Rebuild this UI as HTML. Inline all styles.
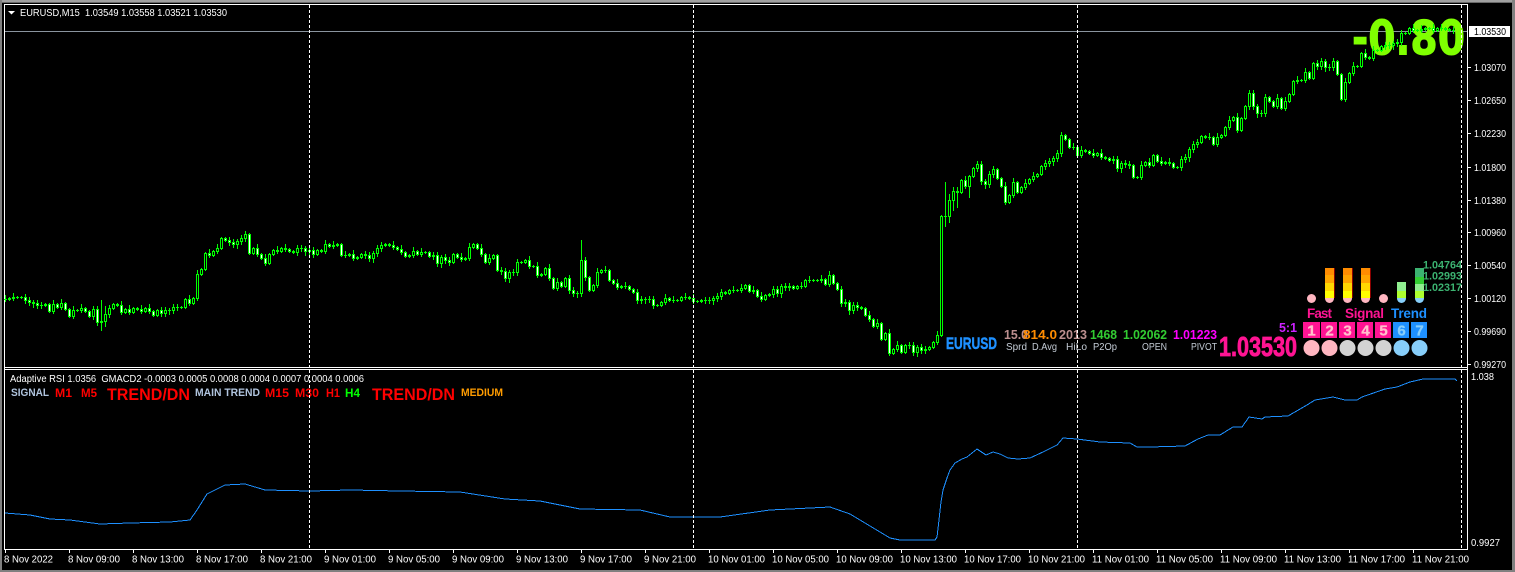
<!DOCTYPE html>
<html><head><meta charset="utf-8"><title>EURUSD,M15</title>
<style>
html,body{margin:0;padding:0;background:#000;width:1515px;height:572px;overflow:hidden}
svg{display:block;position:absolute;left:0;top:0}
text{font-family:"Liberation Sans",sans-serif;fill:#fff;font-size:10px}
.ax{font-size:10px;fill:#fff}
.lb{font-size:10px;fill:#c4ccd6}
.d{font-size:12.5px;font-weight:bold}
.n{font-size:15px;font-weight:bold;text-anchor:middle;stroke-width:.3px}
</style></head><body>
<svg id="c" width="1515" height="572" viewBox="0 0 1515 572" xmlns="http://www.w3.org/2000/svg">
<rect width="1515" height="572" fill="#000"/>
<g shape-rendering="crispEdges">
<rect x="0" y="0" width="1515" height="2" fill="#a0a0a0"/>
<rect x="0" y="2" width="1515" height="1" fill="#696969"/>
<rect x="0" y="0" width="2" height="572" fill="#808080"/>
<rect x="1512" y="0" width="3" height="572" fill="#808080"/>
<rect x="0" y="570" width="1515" height="2" fill="#808080"/>
</g>
<g fill="#fff" shape-rendering="crispEdges">
<rect x="4" y="4" width="1464" height="1"/>
<rect x="4" y="4" width="1" height="546"/>
<rect x="1467" y="4" width="1" height="546"/>
<rect x="4" y="367" width="1464" height="1"/>
<rect x="4" y="369" width="1464" height="1"/>
<rect x="4" y="549" width="1464" height="1"/>
</g>
<rect x="5" y="31" width="1462" height="1" fill="#8a949e" shape-rendering="crispEdges"/>
<text x="1352" y="54.5" textLength="113" lengthAdjust="spacingAndGlyphs" style="font-family:'DejaVu Sans',sans-serif;font-weight:bold;font-size:47px;fill:#7fff00;stroke:#7fff00;stroke-width:1px">-0.80</text>
<g id="candles" shape-rendering="crispEdges"></g>
<polyline fill="none" stroke="#1e90ff" stroke-width="1" shape-rendering="crispEdges" points="5,513 30,515 50,519 70,520 100,524 130,523 170,522 190,520 197,510 207,494 225,485 245,484 265,490 310,491 350,490 400,491 460,492 505,499 540,501 580,509 640,510 670,517 720,517 770,510 830,507 850,514 890,538 900,540 935,540 937,537 939,520 941,502 943,490 947,478 950,470 955,463 962,459 967,457 977,449 986,455 993,452 1000,454 1008,458 1018,459 1030,458 1043,452 1057,445 1063,438 1077,439 1100,442 1130,443 1137,447 1150,447 1185,446 1198,439 1208,435 1220,435 1233,427 1242,427 1249,417 1262,419 1265,417 1288,416 1307,405 1315,400 1333,397 1345,400 1357,400 1362,397 1385,389 1397,387 1410,382 1423,379 1455,379 1457,381"/>

<!-- right-bottom panel -->
<g fill="#ffb6c1">
<circle cx="1311.5" cy="298.5" r="4.5"/><circle cx="1329.5" cy="298.5" r="4.5"/><circle cx="1347.5" cy="298.5" r="4.5"/><circle cx="1365.5" cy="298.5" r="4.5"/><circle cx="1383.5" cy="298.5" r="4.5"/>
</g>
<g fill="#87cefa"><circle cx="1401.5" cy="298.5" r="4.5"/><circle cx="1419.5" cy="298.5" r="4.5"/></g>
<g shape-rendering="crispEdges">
<g id="bars"></g>
<rect x="1397" y="282" width="9" height="9" fill="#90ee90"/><rect x="1397" y="291" width="9" height="7" fill="#adff2f"/>
<rect x="1415" y="268" width="9" height="9" fill="#3cb371"/><rect x="1415" y="277" width="9" height="7" fill="#32cd32"/><rect x="1415" y="284" width="9" height="7" fill="#90ee90"/><rect x="1415" y="291" width="9" height="7" fill="#adff2f"/>
</g>
<text x="1423" y="268.5" textLength="39" lengthAdjust="spacingAndGlyphs" style="fill:#3cb371;font-weight:bold;font-size:11px">1.04764</text>
<text x="1423" y="279.5" textLength="39" lengthAdjust="spacingAndGlyphs" style="fill:#3cb371;font-weight:bold;font-size:11px">1.02993</text>
<text x="1423" y="291" textLength="39" lengthAdjust="spacingAndGlyphs" style="fill:#3cb371;font-weight:bold;font-size:11px">1.02317</text>
<text x="1307" y="318" textLength="25" lengthAdjust="spacing" style="fill:#ff1493;font-size:13.5px;font-weight:bold">Fast</text>
<text x="1345" y="318" textLength="39" lengthAdjust="spacing" style="fill:#ff1493;font-size:13.5px;font-weight:bold">Signal</text>
<text x="1391" y="318" textLength="36" lengthAdjust="spacing" style="fill:#1e90ff;font-size:13.5px;font-weight:bold">Trend</text>
<g shape-rendering="crispEdges" fill="#ff1493">
<rect x="1303" y="322" width="17" height="16"/><rect x="1321" y="322" width="16" height="16"/><rect x="1339" y="322" width="16" height="16"/><rect x="1357" y="322" width="16" height="16"/><rect x="1375" y="322" width="16" height="16"/>
<rect x="1393" y="322" width="16" height="16" fill="#1e90ff"/><rect x="1411" y="322" width="16" height="16" fill="#1e90ff"/>
</g>
<text class="n" x="1311.5" y="335.5" style="fill:#ffc0cb;stroke:#ffc0cb">1</text><text class="n" x="1329.5" y="335.5" style="fill:#ffc0cb;stroke:#ffc0cb">2</text><text class="n" x="1347.5" y="335.5" style="fill:#ffc0cb;stroke:#ffc0cb">3</text><text class="n" x="1365.5" y="335.5" style="fill:#ffc0cb;stroke:#ffc0cb">4</text><text class="n" x="1383.5" y="335.5" style="fill:#ffc0cb;stroke:#ffc0cb">5</text><text class="n" x="1401.5" y="335.5" style="fill:#87cefa;stroke:#87cefa">6</text><text class="n" x="1419.5" y="335.5" style="fill:#87cefa;stroke:#87cefa">7</text>
<circle cx="1311.5" cy="348" r="8" fill="#ffb6c1"/><circle cx="1329.5" cy="348" r="8" fill="#ffb6c1"/><circle cx="1347.5" cy="348" r="8" fill="#d3d3d3"/><circle cx="1365.5" cy="348" r="8" fill="#d3d3d3"/><circle cx="1383.5" cy="348" r="8" fill="#d3d3d3"/><circle cx="1401.5" cy="348" r="8" fill="#87cefa"/><circle cx="1419.5" cy="348" r="8" fill="#87cefa"/>
<text x="1279" y="332" textLength="18" lengthAdjust="spacingAndGlyphs" style="fill:#cc22ff;font-size:13px;font-weight:bold">5:1</text>
<text x="1219" y="356" textLength="78" lengthAdjust="spacingAndGlyphs" style="fill:#ff1493;font-size:27.5px;font-weight:bold;stroke:#ff1493;stroke-width:.8px">1.03530</text>
<text x="946" y="349" textLength="51" lengthAdjust="spacingAndGlyphs" style="fill:#1e90ff;font-size:17px;font-weight:bold;stroke:#1e90ff;stroke-width:.5px">EURUSD</text>
<text class="d" x="1004" y="339" textLength="24" lengthAdjust="spacingAndGlyphs" style="fill:#bc8f8f">15.0</text>
<text class="d" x="1023" y="339" textLength="34" lengthAdjust="spacingAndGlyphs" style="fill:#ff8c00">814.0</text>
<text class="d" x="1059" y="339" textLength="28" lengthAdjust="spacingAndGlyphs" style="fill:#bc8f8f">2013</text>
<text class="d" x="1090" y="339" textLength="27" lengthAdjust="spacingAndGlyphs" style="fill:#32cd32">1468</text>
<text class="d" x="1123" y="339" textLength="44" lengthAdjust="spacingAndGlyphs" style="fill:#32cd32">1.02062</text>
<text class="d" x="1173" y="339" textLength="44" lengthAdjust="spacingAndGlyphs" style="fill:#ff00ff">1.01223</text>
<text class="lb" x="1006" y="350" textLength="21" lengthAdjust="spacingAndGlyphs">Sprd</text>
<text class="lb" x="1032" y="350" textLength="25" lengthAdjust="spacingAndGlyphs">D.Avg</text>
<text class="lb" x="1066" y="350" textLength="21" lengthAdjust="spacingAndGlyphs">HiLo</text>
<text class="lb" x="1093" y="350" textLength="24" lengthAdjust="spacingAndGlyphs">P2Op</text>
<text class="lb" x="1142" y="350" textLength="25" lengthAdjust="spacingAndGlyphs">OPEN</text>
<text class="lb" x="1191" y="350" textLength="26" lengthAdjust="spacingAndGlyphs">PIVOT</text>

<!-- header -->
<polygon points="8,11 15,11 11.5,14.5" fill="#fff"/>
<text x="20" y="16" textLength="207" lengthAdjust="spacingAndGlyphs" xml:space="preserve">EURUSD,M15  1.03549 1.03558 1.03521 1.03530</text>
<text x="10" y="382" textLength="354" lengthAdjust="spacingAndGlyphs" xml:space="preserve">Adaptive RSI 1.0356  GMACD2 -0.0003 0.0005 0.0008 0.0004 0.0007 0.0004 0.0006</text>
<text x="11" y="396" textLength="38" lengthAdjust="spacingAndGlyphs" style="fill:#b0c4de;font-weight:bold;font-size:11px">SIGNAL</text>
<text x="55" y="397" textLength="17" lengthAdjust="spacingAndGlyphs" style="fill:#f00;font-weight:bold;font-size:12px">M1</text>
<text x="81" y="397" textLength="16" lengthAdjust="spacingAndGlyphs" style="fill:#f00;font-weight:bold;font-size:12px">M5</text>
<text x="107" y="400" textLength="83" lengthAdjust="spacingAndGlyphs" style="fill:#f00;font-weight:bold;font-size:17px">TREND/DN</text>
<text x="195" y="396" textLength="65" lengthAdjust="spacingAndGlyphs" style="fill:#b0c4de;font-weight:bold;font-size:11px">MAIN TREND</text>
<text x="265" y="397" textLength="24" lengthAdjust="spacingAndGlyphs" style="fill:#f00;font-weight:bold;font-size:12px">M15</text>
<text x="295" y="397" textLength="24" lengthAdjust="spacingAndGlyphs" style="fill:#f00;font-weight:bold;font-size:12px">M30</text>
<text x="326" y="397" textLength="14" lengthAdjust="spacingAndGlyphs" style="fill:#f00;font-weight:bold;font-size:12px">H1</text>
<text x="345" y="397" textLength="15" lengthAdjust="spacingAndGlyphs" style="fill:#0f0;font-weight:bold;font-size:12px">H4</text>
<text x="372" y="400" textLength="83" lengthAdjust="spacingAndGlyphs" style="fill:#f00;font-weight:bold;font-size:17px">TREND/DN</text>
<text x="461" y="396" textLength="42" lengthAdjust="spacingAndGlyphs" style="fill:#ff9c00;font-weight:bold;font-size:11px">MEDIUM</text>

<!-- dashed -->
<g stroke="#fff" stroke-width="1" stroke-dasharray="3 2" shape-rendering="crispEdges">
<line x1="309.5" y1="5" x2="309.5" y2="367"/><line x1="693.5" y1="5" x2="693.5" y2="367"/><line x1="1077.5" y1="5" x2="1077.5" y2="367"/><line x1="1461.5" y1="5" x2="1461.5" y2="367"/>
<line x1="309.5" y1="370" x2="309.5" y2="549"/><line x1="693.5" y1="370" x2="693.5" y2="549"/><line x1="1077.5" y1="370" x2="1077.5" y2="549"/><line x1="1461.5" y1="370" x2="1461.5" y2="549"/>
</g>

<!-- price axis -->
<g fill="#fff" shape-rendering="crispEdges">
<rect x="1468" y="67" width="3" height="1"/><rect x="1468" y="100" width="3" height="1"/><rect x="1468" y="133" width="3" height="1"/><rect x="1468" y="167" width="3" height="1"/><rect x="1468" y="200" width="3" height="1"/><rect x="1468" y="232" width="3" height="1"/><rect x="1468" y="265" width="3" height="1"/><rect x="1468" y="298" width="3" height="1"/><rect x="1468" y="331" width="3" height="1"/><rect x="1468" y="364" width="3" height="1"/>
<rect x="1469" y="26" width="41" height="11"/>
</g>
<text x="1474" y="35" textLength="32" lengthAdjust="spacingAndGlyphs" style="fill:#000">1.03530</text>
<text x="1471" y="380" textLength="23" lengthAdjust="spacingAndGlyphs">1.038</text>
<text x="1471" y="546" textLength="29" lengthAdjust="spacingAndGlyphs">0.9927</text>
<text class="ax" x="1474" y="71" textLength="32" lengthAdjust="spacingAndGlyphs">1.03070</text>
<text class="ax" x="1474" y="104" textLength="32" lengthAdjust="spacingAndGlyphs">1.02650</text>
<text class="ax" x="1474" y="137" textLength="32" lengthAdjust="spacingAndGlyphs">1.02230</text>
<text class="ax" x="1474" y="171" textLength="32" lengthAdjust="spacingAndGlyphs">1.01800</text>
<text class="ax" x="1474" y="204" textLength="32" lengthAdjust="spacingAndGlyphs">1.01380</text>
<text class="ax" x="1474" y="236" textLength="32" lengthAdjust="spacingAndGlyphs">1.00960</text>
<text class="ax" x="1474" y="269" textLength="32" lengthAdjust="spacingAndGlyphs">1.00540</text>
<text class="ax" x="1474" y="302" textLength="32" lengthAdjust="spacingAndGlyphs">1.00120</text>
<text class="ax" x="1474" y="335" textLength="32" lengthAdjust="spacingAndGlyphs">0.99690</text>
<text class="ax" x="1474" y="368" textLength="32" lengthAdjust="spacingAndGlyphs">0.99270</text>

<!-- time axis -->
<g id="tt" fill="#fff" shape-rendering="crispEdges"></g>
<text x="4" y="562.5" textLength="49" lengthAdjust="spacingAndGlyphs">8 Nov 2022</text>
<text x="68" y="562.5" textLength="52" lengthAdjust="spacingAndGlyphs">8 Nov 09:00</text>
<text x="132" y="562.5" textLength="52" lengthAdjust="spacingAndGlyphs">8 Nov 13:00</text>
<text x="196" y="562.5" textLength="52" lengthAdjust="spacingAndGlyphs">8 Nov 17:00</text>
<text x="260" y="562.5" textLength="52" lengthAdjust="spacingAndGlyphs">8 Nov 21:00</text>
<text x="324" y="562.5" textLength="52" lengthAdjust="spacingAndGlyphs">9 Nov 01:00</text>
<text x="388" y="562.5" textLength="52" lengthAdjust="spacingAndGlyphs">9 Nov 05:00</text>
<text x="452" y="562.5" textLength="52" lengthAdjust="spacingAndGlyphs">9 Nov 09:00</text>
<text x="516" y="562.5" textLength="52" lengthAdjust="spacingAndGlyphs">9 Nov 13:00</text>
<text x="580" y="562.5" textLength="52" lengthAdjust="spacingAndGlyphs">9 Nov 17:00</text>
<text x="644" y="562.5" textLength="52" lengthAdjust="spacingAndGlyphs">9 Nov 21:00</text>
<text x="708" y="562.5" textLength="57" lengthAdjust="spacingAndGlyphs">10 Nov 01:00</text>
<text x="772" y="562.5" textLength="57" lengthAdjust="spacingAndGlyphs">10 Nov 05:00</text>
<text x="836" y="562.5" textLength="57" lengthAdjust="spacingAndGlyphs">10 Nov 09:00</text>
<text x="900" y="562.5" textLength="57" lengthAdjust="spacingAndGlyphs">10 Nov 13:00</text>
<text x="964" y="562.5" textLength="57" lengthAdjust="spacingAndGlyphs">10 Nov 17:00</text>
<text x="1028" y="562.5" textLength="57" lengthAdjust="spacingAndGlyphs">10 Nov 21:00</text>
<text x="1092" y="562.5" textLength="57" lengthAdjust="spacingAndGlyphs">11 Nov 01:00</text>
<text x="1156" y="562.5" textLength="57" lengthAdjust="spacingAndGlyphs">11 Nov 05:00</text>
<text x="1220" y="562.5" textLength="57" lengthAdjust="spacingAndGlyphs">11 Nov 09:00</text>
<text x="1284" y="562.5" textLength="57" lengthAdjust="spacingAndGlyphs">11 Nov 13:00</text>
<text x="1348" y="562.5" textLength="57" lengthAdjust="spacingAndGlyphs">11 Nov 17:00</text>
<text x="1412" y="562.5" textLength="57" lengthAdjust="spacingAndGlyphs">11 Nov 21:00</text>
</svg>
<script>
(function(){
var segs=[
[5,[299,298,297,297,297,300,302,303,305,305,304,311,304,307,303,309,316,310,310,308,311,316,309,322,321,314,308,304,305,312,309,312,308,309,311,308,311,315,310,313,310,310,307,307,307,299,303,298,274,269,253,255,251,248,238,240,242,244,241,238,234,253,248,254,258,263,254,250,251,248,249,251,252,248]],
[301,[248,251,250,254,250,251,244,246,245,244,255,255,254,258,257,254,255,258,253,248,245,244,245,247,249,252,256,255,251,254,252,252,256,255,263,257,260,262,254,257,259,258,247,244,248,254,262,258,255,270,271,278,272,272,262,262,260,266,266,275,274,268,278,288,282,286,278,290,293,293,260,277,290,285,272,270,270,280,283,287,286,286,289,292,300]],
[641,[299,299,299,305,305,302,298,300,300,300,297,297,298,301,301,300,300,300,298,296,292,293,290,290,290,288,285,291,290,296,299,295,294,289,293,286,287,286,288,286,286,280,280,280,280,279,284,275,283,289,303,302,310,305,307,308,315,319,326,323,339,333,353,349,345,352,345,345,352,347,350,349,347,342,335,216,216,200,191,192,180,186,176,168,164]],
[981,[181,184,174,169,178,186,202,195,182,192,187,183,179,176,174,166,163,161,158,153,135,139,147,147,155,150,151,153,155,153,157,158,160,159,168,163,164,165,177,177,165,162,165,155,161,163,162,163,167,167,159,157,149,144,142,136,137,137,144,137,135,127,120,117,130,118,106,93,106,113,113,97,101,106,98,108,101,94,81,80,80,72,78,63,66,61,67,67,61,74,99,82,73,66,66,53,57,58]],
[1373,[50,50,46,45,45,43,42,33,33,28,30,30,29,28,28,30,28,28,29,30,30]]
];
var over={101:[300,330],581:[240,296],945:[182,226],949:[194,222],953:[187,210],957:[188,207],105:[306,326],969:[175,197]};
var w='',g='',f='',k='',prev=299,n=0;
segs.forEach(function(s){s[1].forEach(function(c,j){
 var x=s[0]+4*j,o=prev,t=Math.min(o,c),b=Math.max(o,c);
 n++;var h=(n*7919+n*n*31)%17,u=1+h%4,d=1+(h*3)%4;
 var wt=t-u,wb=b+d;
 if(over[x]){wt=Math.min(wt,over[x][0]);wb=Math.max(wb,over[x][1]);}
 g+='M'+x+' '+wt+'h1V'+(wb+1)+'h-1z';
 w+='M'+(x-1)+' '+t+'h3V'+(b+1)+'h-3z';
 if(b-t>=2){var p='M'+x+' '+(t+1)+'h1V'+b+'h-1z';if(c>o)f+=p;else k+=p;}
 prev=c;
});});
document.getElementById('candles').innerHTML='<path d="'+g+'" fill="#0f0"/><path d="'+w+'" fill="#0f0"/><path d="'+k+'" fill="#000"/><path d="'+f+'" fill="#fff"/>';
var bars='';[1325,1343,1361].forEach(function(x){
 bars+='<rect x="'+x+'" y="268" width="9" height="7" fill="#ff8c00"/><rect x="'+x+'" y="275" width="9" height="8" fill="#ffa500"/><rect x="'+x+'" y="283" width="9" height="8" fill="#ffd700"/><rect x="'+x+'" y="291" width="9" height="7" fill="#ffff00"/><rect x="'+(x+9)+'" y="268" width="1" height="30" fill="#8b0000"/>';
});
document.getElementById('bars').innerHTML=bars;
var tt='';for(var x=5;x<1467;x+=64){tt+='<rect x="'+x+'" y="550" width="1" height="3"/>';}
document.getElementById('tt').innerHTML=tt;
})();
</script>
</body></html>
